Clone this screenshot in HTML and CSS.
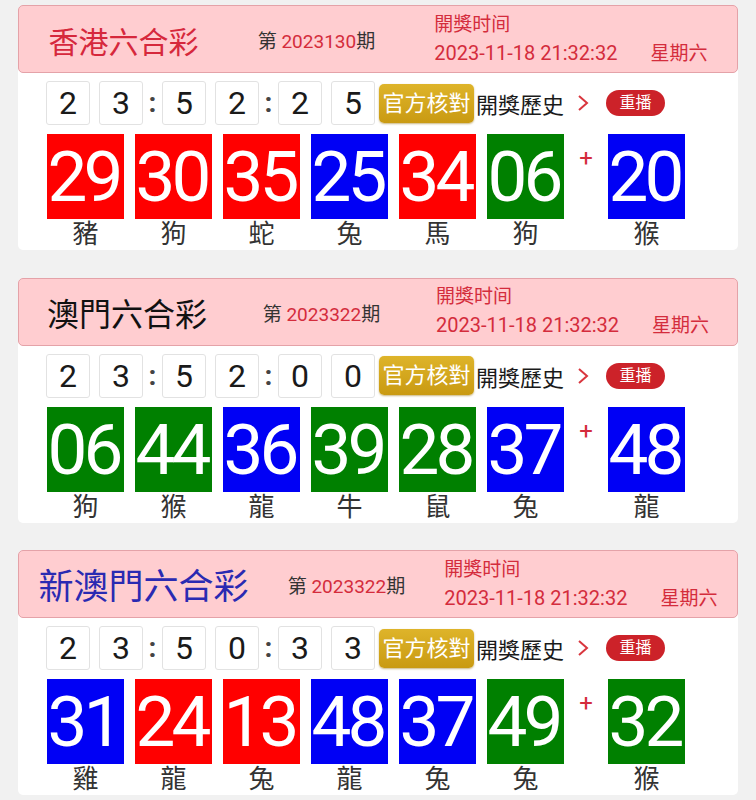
FILE: index.html
```html
<!DOCTYPE html>
<html lang="zh-Hant">
<head>
<meta charset="utf-8">
<title>六合彩</title>
<link rel="stylesheet" href="styles.css">
</head>
<body>
<div class="card card-hk">
  <div class="head">
    <div class="title">香港六合彩</div>
    <div class="period">第 <span class="num">2023130</span>期</div>
    <div class="draw">
      <div class="draw-label">開獎时间</div>
      <div class="draw-time"><span class="dt">2023-11-18 21:32:32</span><span class="wk">星期六</span></div>
    </div>
  </div>
  <div class="body">
    <div class="bar">
      <span class="tbox">2</span><span class="tbox">3</span><span class="colon">:</span><span class="tbox">5</span><span class="tbox">2</span><span class="colon">:</span><span class="tbox">2</span><span class="tbox">5</span>
      <span class="verify">官方核對</span>
      <span class="hist">開獎歷史</span>
      <svg class="chev" viewBox="0 0 12 18" width="12" height="18"><path d="M2 2 L10 9 L2 16" fill="none" stroke="#d9363e" stroke-width="2"/></svg>
      <span class="replay">重播</span>
    </div>
    <div class="balls">
      <div class="col"><div class="ball red">29</div><div class="zod">豬</div></div>
      <div class="col"><div class="ball red">30</div><div class="zod">狗</div></div>
      <div class="col"><div class="ball red">35</div><div class="zod">蛇</div></div>
      <div class="col"><div class="ball blue">25</div><div class="zod">兔</div></div>
      <div class="col"><div class="ball red">34</div><div class="zod">馬</div></div>
      <div class="col"><div class="ball green">06</div><div class="zod">狗</div></div>
      <div class="plus">+</div>
      <div class="col"><div class="ball blue">20</div><div class="zod">猴</div></div>
    </div>
  </div>
</div>

<div class="card card-mo">
  <div class="head">
    <div class="title">澳門六合彩</div>
    <div class="period">第 <span class="num">2023322</span>期</div>
    <div class="draw">
      <div class="draw-label">開獎时间</div>
      <div class="draw-time"><span class="dt">2023-11-18 21:32:32</span><span class="wk">星期六</span></div>
    </div>
  </div>
  <div class="body">
    <div class="bar">
      <span class="tbox">2</span><span class="tbox">3</span><span class="colon">:</span><span class="tbox">5</span><span class="tbox">2</span><span class="colon">:</span><span class="tbox">0</span><span class="tbox">0</span>
      <span class="verify">官方核對</span>
      <span class="hist">開獎歷史</span>
      <svg class="chev" viewBox="0 0 12 18" width="12" height="18"><path d="M2 2 L10 9 L2 16" fill="none" stroke="#d9363e" stroke-width="2"/></svg>
      <span class="replay">重播</span>
    </div>
    <div class="balls">
      <div class="col"><div class="ball green">06</div><div class="zod">狗</div></div>
      <div class="col"><div class="ball green">44</div><div class="zod">猴</div></div>
      <div class="col"><div class="ball blue">36</div><div class="zod">龍</div></div>
      <div class="col"><div class="ball green">39</div><div class="zod">牛</div></div>
      <div class="col"><div class="ball green">28</div><div class="zod">鼠</div></div>
      <div class="col"><div class="ball blue">37</div><div class="zod">兔</div></div>
      <div class="plus">+</div>
      <div class="col"><div class="ball blue">48</div><div class="zod">龍</div></div>
    </div>
  </div>
</div>

<div class="card card-nmo">
  <div class="head">
    <div class="title">新澳門六合彩</div>
    <div class="period">第 <span class="num">2023322</span>期</div>
    <div class="draw">
      <div class="draw-label">開獎时间</div>
      <div class="draw-time"><span class="dt">2023-11-18 21:32:32</span><span class="wk">星期六</span></div>
    </div>
  </div>
  <div class="body">
    <div class="bar">
      <span class="tbox">2</span><span class="tbox">3</span><span class="colon">:</span><span class="tbox">5</span><span class="tbox">0</span><span class="colon">:</span><span class="tbox">3</span><span class="tbox">3</span>
      <span class="verify">官方核對</span>
      <span class="hist">開獎歷史</span>
      <svg class="chev" viewBox="0 0 12 18" width="12" height="18"><path d="M2 2 L10 9 L2 16" fill="none" stroke="#d9363e" stroke-width="2"/></svg>
      <span class="replay">重播</span>
    </div>
    <div class="balls">
      <div class="col"><div class="ball blue">31</div><div class="zod">雞</div></div>
      <div class="col"><div class="ball red">24</div><div class="zod">龍</div></div>
      <div class="col"><div class="ball red">13</div><div class="zod">兔</div></div>
      <div class="col"><div class="ball blue">48</div><div class="zod">龍</div></div>
      <div class="col"><div class="ball blue">37</div><div class="zod">兔</div></div>
      <div class="col"><div class="ball green">49</div><div class="zod">兔</div></div>
      <div class="plus">+</div>
      <div class="col"><div class="ball green">32</div><div class="zod">猴</div></div>
    </div>
  </div>
</div>
</body>
</html>
```

FILE: styles.css
```css
html, body {
  margin: 0;
  padding: 0;
}
body {
  background: #f1f1f1;
  font-family: Roboto, "Noto Sans CJK TC", "Noto Sans", sans-serif;
  color: #222;
  padding-top: 5px;
}
.card {
  width: 720px;
  margin: 0 0 27.5px 18px;
  background: #fff;
  border-radius: 5px;
}
.head {
  height: 66px;
  background: #ffcdd0;
  border: 1px solid #e4a2a8;
  border-radius: 5px;
  display: flex;
  justify-content: space-around;
  align-items: center;
}
.title {
  font-size: 30px;
  line-height: 40px;
  margin-top: 7px;
  color: #d6283c;
}
.card-mo .title {
  font-size: 32px;
  color: #111;
}
.card-nmo .title {
  font-size: 35px;
  color: #2a2ab2;
}
.period {
  font-size: 19px;
  line-height: 24px;
  margin-top: 6px;
  color: #333;
  white-space: nowrap;
}
.period .num {
  color: #d42c3c;
}
.draw {
  color: #d42c3c;
  font-size: 19px;
  line-height: 28px;
}
.draw-time {
  display: flex;
  align-items: baseline;
}
.dt {
  font-size: 20px;
}
.wk {
  margin-left: 33px;
}
.body {
  padding: 8px 0 0 28px;
}
.bar {
  display: flex;
  align-items: center;
  height: 44px;
}
.tbox {
  width: 42px;
  height: 42px;
  border: 1px solid #e2e2e2;
  border-radius: 3px;
  background: #fff;
  font-size: 32px;
  line-height: 42px;
  text-align: center;
  color: #1a1a1a;
}
.tbox + .tbox {
  margin-left: 9px;
}
.colon {
  width: 19px;
  text-align: center;
  font-size: 28px;
  font-weight: bold;
  color: #444;
  line-height: 42px;
}
.verify {
  margin-left: 4px;
  width: 95px;
  height: 39px;
  box-sizing: border-box;
  border-radius: 5px;
  background: linear-gradient(#deb42a, #c99a12);
  box-shadow: 0 1px 2px rgba(150, 110, 0, 0.5);
  color: #fff;
  font-size: 22px;
  line-height: 39px;
  text-align: center;
  white-space: nowrap;
}
.hist {
  margin-left: 2px;
  font-size: 22px;
  color: #1a1a1a;
  white-space: nowrap;
}
.chev {
  margin-left: 13px;
}
.replay {
  margin-left: 17px;
  width: 59px;
  height: 26px;
  border-radius: 13px;
  background: #cc2229;
  color: #fff;
  font-size: 16px;
  line-height: 26px;
  text-align: center;
}
.balls {
  display: flex;
  gap: 11px;
  margin-top: 9px;
  padding-left: 1px;
}
.col {
  width: 77px;
  display: flex;
  flex-direction: column;
  align-items: center;
}
.ball {
  width: 77px;
  height: 85px;
  color: #fff;
  font-size: 71px;
  letter-spacing: -4px;
  text-indent: -4px;
  line-height: 85px;
  text-align: center;
}
.red { background: #ff0000; }
.blue { background: #0000f5; }
.green { background: #008000; }
.zod {
  font-size: 26px;
  line-height: 31px;
  color: #333;
}
.plus {
  width: 22px;
  text-align: center;
  color: #d42c3c;
  font-size: 24px;
  line-height: 24px;
  margin-top: 12px;
}
```
